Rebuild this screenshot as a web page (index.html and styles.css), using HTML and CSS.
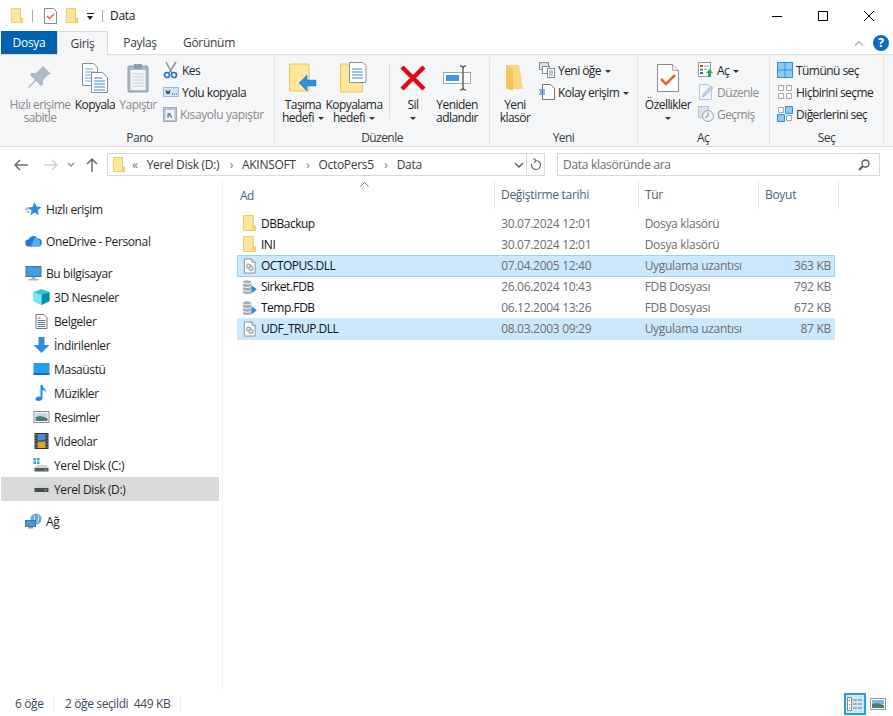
FILE: index.html
```html
<!DOCTYPE html>
<html lang="tr">
<head>
    <meta charset="UTF-8">
    <title>Data</title>
    <link rel="stylesheet" href="styles.css">
</head>
<body>
<svg class="defs" width="0" height="0">
    <symbol id="folder" viewBox="0 0 16 18">
        <path d="M1.500 .5h10.500v16H1.500z" fill="#fee79a" stroke="#e9c765"/>
        <path d="M12 11.500h2.500v5H12z" fill="#fbd872" stroke="#e9c765"/>
    </symbol>
    <symbol id="dll" viewBox="0 0 16 16">
        <path d="M2.500 .5h8l3.500 3.500v11.500H2.500z" fill="#fff" stroke="#8b8b8b"/>
        <path d="M10.500 .5v3.500h3.500" fill="#eee" stroke="#8b8b8b"/>
        <circle cx="7" cy="8" r="2.200" fill="#e4e8ec" stroke="#96a0aa" stroke-width="1.200"/>
        <circle cx="9.500" cy="10.500" r="2.200" fill="#dfe3e8" stroke="#96a0aa" stroke-width="1.200"/>
    </symbol>
    <symbol id="db" viewBox="0 0 16 16">
        <path d="M1 3c0-3 9-3 9 0v11c0 2-9 2-9 0z" fill="#a9adb0"/>
        <path d="M1 3c0 2 9 2 9 0M1 7c0 2 9 2 9 0M1 11c0 2 9 2 9 0" fill="none" stroke="#eef0f1" stroke-width="1.200"/>
        <path d="M10 6l6 4.500-6 4.500z" fill="#2f8fd0"/>
    </symbol>
</svg>

<div class="window">
    <div class="titlebar">
        <svg class="qa-icon" width="14" height="16"><use href="#folder"/></svg>
        <span class="qa-sep"></span>
        <svg class="qa-icon" width="13" height="16" viewBox="0 0 13 16">
            <path d="M.5 .5h9l3 3v12H.5z" fill="#fff" stroke="#8a8a8a"/>
            <path d="M3 8l2.500 2.500L10 6" fill="none" stroke="#e8622a" stroke-width="1.500"/>
        </svg>
        <svg class="qa-icon" width="14" height="16"><use href="#folder"/></svg>
        <span class="qa-drop"></span>
        <span class="qa-sep"></span>
        <span class="window-title">Data</span>
        <div class="window-btns">
            <svg width="12" height="12" viewBox="0 0 12 12"><path d="M1 6.500h10" stroke="#000"/></svg>
            <svg width="12" height="12" viewBox="0 0 12 12"><path d="M1.500 1.500h9v9h-9z" fill="none" stroke="#000"/></svg>
            <svg width="12" height="12" viewBox="0 0 12 12"><path d="M1 1l10 10M11 1L1 11" stroke="#000"/></svg>
        </div>
    </div>

    <div class="tabs">
        <span class="tab tab-file">Dosya</span>
        <span class="tab tab-active">Giriş</span>
        <span class="tab tab-paylas">Paylaş</span>
        <span class="tab tab-gorunum">Görünüm</span>
        <div class="tabs-right">
            <svg width="10" height="6" viewBox="0 0 10 6"><path d="M1 5.500l4-4 4 4" fill="none" stroke="#a8a8a8" stroke-width="1.200"/></svg>
            <span class="help">?</span>
        </div>
    </div>

    <div class="ribbon">
        <div class="group group-pano">
            <div class="group-body">
                <div class="big w64 disabled">
                    <div class="big-icon"><svg width="26" height="28" viewBox="0 0 26 28">
                        <path d="M16 2l8 8-3 1-5 5 0 5-2 1-5-5-7 7-1-1 7-7-5-5 1-2 5 0 5-5z" fill="#aeb9c9"/>
                    </svg></div>
                    <span>Hızlı erişime</span><span>sabitle</span>
                </div>
                <div class="big w46">
                    <div class="big-icon"><svg width="26" height="30" viewBox="0 0 26 30">
                        <path d="M.5 .5h11l4 4v18H.5z" fill="#fff" stroke="#8c8c8c"/>
                        <path d="M3 6h8M3 9h10M3 12h10M3 15h10M3 18h10" stroke="#6ea5e0"/>
                        <path d="M9.500 9.500h11l5 5v15h-16z" fill="#fff" stroke="#8c8c8c"/>
                        <path d="M12 15h8M12 18h11M12 21h11M12 24h11M12 27h11" stroke="#3a83dc"/>
                    </svg></div>
                    <span>Kopyala</span>
                </div>
                <div class="big w40 disabled">
                    <div class="big-icon"><svg width="22" height="30" viewBox="0 0 22 30">
                        <rect x="1" y="3" width="20" height="26" rx="1" fill="#a9b8cc" stroke="#8d9cb2"/>
                        <rect x="3.500" y="7" width="15" height="20" fill="#f2f4f8"/>
                        <path d="M5 11h12M5 14h12M5 17h12M5 20h12M5 23h12" stroke="#c6d3e6"/>
                        <rect x="7" y="1" width="8" height="5" fill="#8d9cb2"/>
                    </svg></div>
                    <span>Yapıştır</span>
                </div>
                <div class="small-col col-pano">
                    <div class="small"><svg width="16" height="18" viewBox="0 0 16 18">
                        <path d="M3 1l6 11M13 1L6 12" stroke="#8a8f96" stroke-width="1.500"/>
                        <circle cx="4" cy="14" r="2.500" fill="none" stroke="#2275c8" stroke-width="1.700"/>
                        <circle cx="11" cy="14" r="2.500" fill="none" stroke="#2275c8" stroke-width="1.700"/>
                    </svg><span>Kes</span></div>
                    <div class="small"><svg width="16" height="10" viewBox="0 0 16 10">
                        <rect x=".5" y=".5" width="15" height="9" fill="#cfe4f7" stroke="#9dbad4"/>
                        <path d="M3 3l1 4 1-3 1 3 1-4M9 7h1M11 7h1M13 7h1" fill="none" stroke="#33475b"/>
                    </svg><span>Yolu kopyala</span></div>
                    <div class="small disabled wide"><svg width="14" height="16" viewBox="0 0 14 16">
                        <rect x=".5" y="1.500" width="13" height="14" fill="#b5c3d4" stroke="#9aabc0"/>
                        <rect x="2.500" y="4" width="9" height="10" fill="#f1f4f8"/>
                        <path d="M5 12V8h3M6 8.500l3 3" fill="none" stroke="#6a7f99" stroke-width="1.400"/>
                    </svg><span>Kısayolu yapıştır</span></div>
                </div>
            </div>
            <div class="group-title">Pano</div>
        </div>

        <div class="group group-duzenle">
            <div class="group-body">
                <div class="big w50">
                    <div class="big-icon"><svg width="28" height="30" viewBox="0 0 28 30">
                        <path d="M.5 1h19.500v27H.5z" fill="#fee79a" stroke="#e9c560"/>
                        <path d="M10 20l8-8v5h9v6h-9v5z" fill="#2f8ee0" stroke="#2579c0" stroke-width=".5"/>
                    </svg></div>
                    <span>Taşıma</span><span>hedefi<i class="drop"></i></span>
                </div>
                <div class="big w52">
                    <div class="big-icon"><svg width="28" height="31" viewBox="0 0 28 31">
                        <path d="M.5 2h7v2h15v26H.5z" fill="#fee79a" stroke="#e9c560"/>
                        <path d="M9.500 .5h13l3.500 3v17H9.500z" fill="#fff" stroke="#8c8c8c"/>
                        <path d="M12 7h10M12 10h11M12 13h11M12 16h11" stroke="#3a83dc"/>
                    </svg></div>
                    <span>Kopyalama</span><span>hedefi<i class="drop"></i></span>
                </div>
                <span class="inner-sep"></span>
                <div class="big w36">
                    <div class="big-icon"><svg width="26" height="26" viewBox="0 0 26 26">
                        <path d="M2 2l22 22M24 2L2 24" stroke="#e30613" stroke-width="4.500"/>
                    </svg></div>
                    <span>Sil</span><span><i class="drop solo"></i></span>
                </div>
                <div class="big w52">
                    <div class="big-icon"><svg width="28" height="26" viewBox="0 0 28 26">
                        <rect x=".5" y="7.500" width="27" height="11" fill="#fff" stroke="#a6a6a6"/>
                        <rect x="3" y="10" width="13" height="6" fill="#3a9ae8"/>
                        <path d="M17 1c2 0 3 1 3 2v20c0 1-1 2-3 2M23 1c-2 0-3 1-3 2v20c0 1 1 2 3 2" fill="none" stroke="#666" stroke-width="1.500"/>
                    </svg></div>
                    <span>Yeniden</span><span>adlandır</span>
                </div>
            </div>
            <div class="group-title">Düzenle</div>
        </div>

        <div class="group group-yeni">
            <div class="group-body">
                <div class="big w44">
                    <div class="big-icon"><svg width="20" height="28" viewBox="0 0 20 28">
                        <path d="M1 1h13l4 24H1z" fill="#fbd67c"/>
                        <path d="M1 1l7 4v22l-7-3z" fill="#f4c562"/>
                    </svg></div>
                    <span>Yeni</span><span>klasör</span>
                </div>
                <div class="small-col col-yeni">
                    <div class="small"><svg width="16" height="16" viewBox="0 0 16 16">
                        <rect x=".5" y=".5" width="9" height="7" fill="#d3e6f6" stroke="#7a93ab"/>
                        <rect x="3.500" y="4.500" width="7" height="7" fill="#fff" stroke="#888"/>
                        <rect x="8.500" y="6.500" width="7" height="9" fill="#fff" stroke="#888"/>
                        <path d="M10 9h4M10 11h4M10 13h4" stroke="#7a93ab"/>
                    </svg><span>Yeni öğe<i class="drop"></i></span></div>
                    <div class="small"><svg width="16" height="16" viewBox="0 0 16 16">
                        <path d="M3.500 .5h8l4 4v11h-12z" fill="#fff" stroke="#777"/>
                        <path d="M0 6h6M1 8h5M0 10h6" stroke="#2275c8"/>
                    </svg><span>Kolay erişim<i class="drop"></i></span></div>
                </div>
            </div>
            <div class="group-title">Yeni</div>
        </div>

        <div class="group group-ac">
            <div class="group-body">
                <div class="big w56">
                    <div class="big-icon"><svg width="22" height="28" viewBox="0 0 22 28">
                        <path d="M.5 .5h15l6 6v21H.5z" fill="#fff" stroke="#8a8a8a"/>
                        <path d="M15.500 .5v6h6" fill="#eee" stroke="#aaa"/>
                        <path d="M4 15l5 5 9-9" fill="none" stroke="#e8622a" stroke-width="2.500"/>
                    </svg></div>
                    <span>Özellikler</span><span><i class="drop solo"></i></span>
                </div>
                <div class="small-col col-ac">
                    <div class="small"><svg width="16" height="16" viewBox="0 0 16 16">
                        <rect x=".5" y=".5" width="12" height="14" fill="#fff" stroke="#999"/>
                        <path d="M2 3h3v2H2z" fill="#d9402e"/><path d="M2 6.500h3v2H2z" fill="#3aa34a"/><path d="M2 10h3v2H2z" fill="#2275c8"/>
                        <path d="M6 4h5M6 7.500h3" stroke="#999"/>
                        <path d="M8 11l3.500-4 3.500 4h-2v4h-3v-4z" fill="#22b14c"/>
                    </svg><span>Aç<i class="drop"></i></span></div>
                    <div class="small disabled"><svg width="16" height="16" viewBox="0 0 16 16">
                        <path d="M1.500 .5h9l3 3v12h-12z" fill="#f3f6fa" stroke="#b9c4d2"/>
                        <path d="M4 13l1-3 8-8 2 2-8 8z" fill="#bed2e8" stroke="#9db4cf" stroke-width=".6"/>
                    </svg><span>Düzenle</span></div>
                    <div class="small disabled"><svg width="16" height="16" viewBox="0 0 16 16">
                        <rect x=".5" y=".5" width="10" height="11" fill="#d6e0ec" stroke="#b9c4d2"/>
                        <circle cx="10" cy="10" r="5.500" fill="#eef1f4" stroke="#9aa2ab"/>
                        <path d="M10 6.500V10l-3 1.500" fill="none" stroke="#7d858e"/>
                    </svg><span>Geçmiş</span></div>
                </div>
            </div>
            <div class="group-title">Aç</div>
        </div>

        <div class="group group-sec">
            <div class="group-body">
                <div class="small-col col-sec">
                    <div class="small"><svg width="16" height="16" viewBox="0 0 16 16">
                        <rect x=".5" y=".5" width="15" height="15" fill="#8ec8f2" stroke="#2f93dc"/>
                        <path d="M8 0v16M0 8h16" stroke="#2f93dc"/>
                    </svg><span>Tümünü seç</span></div>
                    <div class="small"><svg width="16" height="16" viewBox="0 0 16 16">
                        <path d="M1.500 1.500h5v5h-5zM9.500 1.500h5v5h-5zM1.500 9.500h5v5h-5zM9.500 9.500h5v5h-5z" fill="#fff" stroke="#a5a5a5"/>
                    </svg><span>Hiçbirini seçme</span></div>
                    <div class="small"><svg width="16" height="16" viewBox="0 0 16 16">
                        <path d="M1.500 1.500h5v5h-5zM9.500 9.500h5v5h-5z" fill="#fff" stroke="#a5a5a5"/>
                        <path d="M8.500 .5h7v7h-7zM.5 8.500h7v7h-7z" fill="#8ec8f2" stroke="#2f93dc"/>
                    </svg><span>Diğerlerini seç</span></div>
                </div>
            </div>
            <div class="group-title">Seç</div>
        </div>
    </div>

    <div class="addressbar">
        <div class="nav">
            <svg class="nav-back" width="14" height="12" viewBox="0 0 14 12"><path d="M6 1L1 6l5 5M1 6h13" fill="none" stroke="#6d6d6d" stroke-width="1.500"/></svg>
            <svg class="nav-fwd" width="14" height="12" viewBox="0 0 14 12"><path d="M8 1l5 5-5 5M13 6H0" fill="none" stroke="#d0d0d0" stroke-width="1.500"/></svg>
            <svg class="nav-down" width="8" height="5" viewBox="0 0 8 5"><path d="M1 1l3 3 3-3" fill="none" stroke="#8a8a8a" stroke-width="1.300"/></svg>
            <svg class="nav-up" width="12" height="14" viewBox="0 0 12 14"><path d="M1 6l5-5 5 5M6 1v13" fill="none" stroke="#6d6d6d" stroke-width="1.500"/></svg>
        </div>
        <div class="path">
            <svg width="14" height="16"><use href="#folder"/></svg>
            <span class="crumb-more">«</span>
            <span>Yerel Disk (D:)</span><span class="chev">›</span>
            <span>AKINSOFT</span><span class="chev">›</span>
            <span>OctoPers5</span><span class="chev">›</span>
            <span>Data</span>
            <svg class="path-down" width="10" height="6" viewBox="0 0 10 6"><path d="M1 1l4 4 4-4" fill="none" stroke="#555" stroke-width="1.300"/></svg>
            <span class="refresh"><svg width="12" height="13" viewBox="0 0 12 13"><path d="M6 2.500a4.500 4.500 0 1 1-4.300 3.200M3.500 .5L6 2.500 4 5" fill="none" stroke="#6d6d6d" stroke-width="1.200"/></svg></span>
        </div>
        <div class="search">
            <span>Data klasöründe ara</span>
            <svg width="12" height="12" viewBox="0 0 12 12"><circle cx="7.500" cy="4.500" r="3.500" fill="none" stroke="#555" stroke-width="1.300"/><path d="M5 7l-4 4" stroke="#555" stroke-width="1.800"/></svg>
        </div>
    </div>

    <div class="content">
        <nav class="sidebar">
            <div class="tree-row top">
                <svg width="16" height="16" viewBox="0 0 16 16"><path d="M9 1l2 4.500 5 .5-3.700 3.300 1 5L9 11.500 5 14.500l1-5.200L1.500 6.500 7 6z" fill="#2f8ee0"/><path d="M0 8h3M1 11h3" stroke="#2f8ee0"/></svg>
                <span>Hızlı erişim</span>
            </div>
            <div class="tree-row top">
                <svg width="17" height="12" viewBox="0 0 17 12"><path d="M4 11.500a3.500 3.500 0 0 1-.5-7A5 5 0 0 1 12.500 3.500 4 4 0 0 1 13 11.500z" fill="#1f7ad8"/><path d="M9 4c2-2 3-1 3.500 0a4 4 0 0 1 .5 7.500H6z" fill="#54aef0"/></svg>
                <span>OneDrive - Personal</span>
            </div>
            <div class="tree-row top">
                <svg width="16" height="15" viewBox="0 0 16 15"><rect x=".5" y=".5" width="15" height="10" fill="#3aa0ec" stroke="#5e6f80"/><path d="M6 11h4v2H6zM3 13h10v1.500H3z" fill="#a9b6c2"/></svg>
                <span>Bu bilgisayar</span>
            </div>
            <div class="tree-row sub">
                <svg width="16" height="16" viewBox="0 0 16 16"><path d="M8 0l8 3v9l-8 4-8-4V3z" fill="#31c4d8"/><path d="M8 6l8-3v9l-8 4z" fill="#0c8ca8"/><path d="M0 3l8 3v10l-8-4z" fill="#7de3ee"/></svg>
                <span>3D Nesneler</span>
            </div>
            <div class="tree-row sub">
                <svg width="12" height="15" viewBox="0 0 12 15"><path d="M.5 .5h8l3 3v11H.5z" fill="#fff" stroke="#777"/><path d="M2 4h3M2 6.500h8M2 8.500h8M2 10.500h8M2 12.500h8" stroke="#5b7fa6"/></svg>
                <span>Belgeler</span>
            </div>
            <div class="tree-row sub">
                <svg width="16" height="16" viewBox="0 0 16 16"><path d="M5 0h6v8h5l-8 8-8-8h5z" fill="#2f8ee0"/></svg>
                <span>İndirilenler</span>
            </div>
            <div class="tree-row sub">
                <svg width="16" height="12" viewBox="0 0 16 12"><rect width="16" height="11" rx="1" fill="#22a0f0"/><path d="M0 10h16v2H0z" fill="#0f6fc0"/></svg>
                <span>Masaüstü</span>
            </div>
            <div class="tree-row sub">
                <svg width="12" height="16" viewBox="0 0 12 16"><path d="M5 0h2c0 3 4 4 4 8-1-2-2-3-4-3v8c0 2-2 3-4 3s-3-1-3-2c0-2 3-3 5-2z" fill="#1e8ce6"/></svg>
                <span>Müzikler</span>
            </div>
            <div class="tree-row sub">
                <svg width="16" height="12" viewBox="0 0 16 12"><rect x=".5" y=".5" width="15" height="11" fill="#fff" stroke="#8a8a8a"/><path d="M2 2h12v4H2z" fill="#bcd7ec"/><path d="M2 6l5-1 7 2v3H2z" fill="#4d7a74"/></svg>
                <span>Resimler</span>
            </div>
            <div class="tree-row sub">
                <svg width="14" height="16" viewBox="0 0 14 16"><rect width="14" height="16" fill="#333"/><rect x="3" y="1" width="8" height="6.500" fill="#3f8fdc"/><rect x="3" y="8.500" width="8" height="6.500" fill="#d8a530"/><path d="M1 2h1M1 5h1M1 8h1M1 11h1M1 14h1M12 2h1M12 5h1M12 8h1M12 11h1M12 14h1" stroke="#ddd"/></svg>
                <span>Videolar</span>
            </div>
            <div class="tree-row sub">
                <svg width="16" height="14" viewBox="0 0 16 14"><path d="M0 0h2.500v2.500H0zM3.500 0H6v2.500H3.500zM0 3.500h2.500V6H0zM3.500 3.500H6V6H3.500z" fill="#16a8e8"/><path d="M3 7h10l2 3H1z" fill="#d3d6d9"/><rect x="1" y="10" width="14" height="3.500" fill="#555a5f"/><rect x="11" y="11" width="2" height="1.500" fill="#4fd04f"/></svg>
                <span>Yerel Disk (C:)</span>
            </div>
            <div class="tree-row sub current">
                <svg width="16" height="8" viewBox="0 0 16 8"><path d="M3 0h10l2 3H1z" fill="#cfd2d5"/><rect x="1" y="3" width="14" height="4" fill="#454a4f"/><rect x="11" y="4.500" width="2" height="1.500" fill="#4fd04f"/></svg>
                <span>Yerel Disk (D:)</span>
            </div>
            <div class="tree-row top">
                <svg width="17" height="16" viewBox="0 0 17 16"><circle cx="11" cy="6" r="5.500" fill="#5ea9d8"/><path d="M8 2c2 1 2 3 1 5M13 2c1 2 1 5-1 8" stroke="#cfe7f5" fill="none"/><rect x=".5" y="7.500" width="10" height="6" fill="#3aa0ec" stroke="#5e6f80"/><path d="M3 14h5v1.500H3z" fill="#8a98a5"/></svg>
                <span>Ağ</span>
            </div>
        </nav>

        <main class="files">
            <div class="file-head">
                <svg class="sort" width="9" height="5" viewBox="0 0 9 5"><path d="M.5 4.500l4-4 4 4" fill="none" stroke="#777"/></svg>
                <span class="col-name">Ad</span>
                <span class="col-date">Değiştirme tarihi</span>
                <span class="col-type">Tür</span>
                <span class="col-size">Boyut</span>
            </div>
            <div class="file-row">
                <span class="col-name"><svg width="15" height="17"><use href="#folder"/></svg>DBBackup</span>
                <span class="col-date">30.07.2024 12:01</span><span class="col-type">Dosya klasörü</span><span class="col-size"></span>
            </div>
            <div class="file-row">
                <span class="col-name"><svg width="15" height="17"><use href="#folder"/></svg>INI</span>
                <span class="col-date">30.07.2024 12:01</span><span class="col-type">Dosya klasörü</span><span class="col-size"></span>
            </div>
            <div class="file-row selected focused">
                <span class="col-name"><svg width="15" height="16"><use href="#dll"/></svg>OCTOPUS.DLL</span>
                <span class="col-date">07.04.2005 12:40</span><span class="col-type">Uygulama uzantısı</span><span class="col-size">363 KB</span>
            </div>
            <div class="file-row">
                <span class="col-name"><svg width="15" height="16"><use href="#db"/></svg>Sirket.FDB</span>
                <span class="col-date">26.06.2024 10:43</span><span class="col-type">FDB Dosyası</span><span class="col-size">792 KB</span>
            </div>
            <div class="file-row">
                <span class="col-name"><svg width="15" height="16"><use href="#db"/></svg>Temp.FDB</span>
                <span class="col-date">06.12.2004 13:26</span><span class="col-type">FDB Dosyası</span><span class="col-size">672 KB</span>
            </div>
            <div class="file-row selected">
                <span class="col-name"><svg width="15" height="16"><use href="#dll"/></svg>UDF_TRUP.DLL</span>
                <span class="col-date">08.03.2003 09:29</span><span class="col-type">Uygulama uzantısı</span><span class="col-size">87 KB</span>
            </div>
        </main>
    </div>

    <div class="statusbar">
        <span class="count">6 öğe</span>
        <span class="sel">2 öğe seçildi&nbsp; 449 KB</span>
        <div class="views">
            <span class="view active"><svg width="16" height="14" viewBox="0 0 16 14">
                <path d="M.5 .5h4v13h-4z" fill="#fff" stroke="#8a8a8a"/>
                <path d="M2 3h1v1H2zM2 7h1v1H2z" fill="#666"/><path d="M2 10.500h1v1H2z" fill="#c0392b"/>
                <path d="M6 3h4M11 3h4M6 7h4M11 7h4M6 11h4M11 11h4" stroke="#777"/>
            </svg></span>
            <span class="view"><svg width="16" height="12" viewBox="0 0 16 12">
                <rect x=".5" y=".5" width="15" height="11" fill="#fff" stroke="#999"/>
                <path d="M2 2h12v4H2z" fill="#7db7e8"/><path d="M2 6l5-1 7 2v3H2z" fill="#4d7a74"/>
            </svg></span>
        </div>
    </div>
</div>
</body>
</html>
```

FILE: styles.css
```css
* {
    box-sizing: border-box;
}
html, body {
    margin: 0;
    padding: 0;
    background: #fff;
}
body {
    font-family: "Open Sans", "Noto Sans", sans-serif;
    font-size: 12px;
    letter-spacing: -0.3px;
    color: #1e1e1e;
}
.defs {
    display: block;
    height: 0;
}
svg {
    flex: none;
    display: block;
}
.window {
    width: 893px;
    height: 716px;
    display: flex;
    flex-direction: column;
    overflow: hidden;
}

/* title bar */
.titlebar {
    height: 31px;
    display: flex;
    align-items: center;
    padding-left: 10px;
}
.qa-icon {
    margin-right: 8px;
}
.qa-sep {
    width: 1px;
    height: 12px;
    background: #a8a8a8;
    margin-right: 11px;
}
.qa-drop {
    width: 7px;
    height: 7px;
    margin: 1px 8px 0 0;
    border-top: 1px solid #222;
    position: relative;
}
.qa-drop::after {
    content: "";
    position: absolute;
    left: 0;
    top: 2px;
    border: 3.500px solid transparent;
    border-top: 4px solid #222;
    border-bottom: 0;
}
.window-title {
    margin-left: -4px;
    color: #111;
}
.window-btns {
    margin-left: auto;
    display: flex;
    align-items: center;
    gap: 34px;
    padding-right: 18px;
}

/* tabs */
.tabs {
    height: 24px;
    display: flex;
    align-items: stretch;
    padding-left: 1px;
    border-bottom: 1px solid #dadbdc;
}
.tab {
    display: flex;
    align-items: center;
    justify-content: center;
    color: #3b3b3b;
}
.tab-file {
    width: 56px;
    height: 23px;
    background: #0063b1;
    color: #fff;
}
.tab-active {
    width: 51px;
    height: 24px;
    background: #f5f6f7;
    border: 1px solid #dadbdc;
    border-bottom: 0;
}
.tab-paylas {
    margin-left: 16px;
    width: 32px;
}
.tab-gorunum {
    margin-left: 28px;
    width: 50px;
}
.tabs-right {
    margin-left: auto;
    display: flex;
    align-items: center;
    gap: 9px;
    padding-right: 4px;
}
.help {
    width: 16px;
    height: 16px;
    border-radius: 50%;
    background: #0f6cbd;
    color: #fff;
    font-weight: 700;
    line-height: 16px;
    text-align: center;
}

/* ribbon */
.ribbon {
    height: 92px;
    display: flex;
    padding-left: 1px;
    background: #f5f6f7;
    border-bottom: 1px solid #dadbdc;
    letter-spacing: -0.55px;
}
.group {
    display: flex;
    flex-direction: column;
    height: 88px;
    margin-top: 2px;
    border-right: 1px solid #e2e3e4;
}
.group-pano { width: 274px; padding-left: 7px; }
.group-duzenle { width: 215px; padding-left: 3px; }
.group-yeni { width: 148px; padding-left: 3px; }
.group-ac { width: 132px; padding-left: 2px; }
.group-sec { width: 114px; }
.group-body {
    height: 74px;
    display: flex;
}
.group-title {
    text-align: center;
    color: #3b3b3b;
    line-height: 14px;
}
.group-pano .group-title,
.group-duzenle .group-title,
.group-yeni .group-title,
.group-ac .group-title {
    margin-left: -3px;
}
.big {
    flex: none;
    display: flex;
    flex-direction: column;
    align-items: center;
    text-align: center;
    line-height: 13px;
    color: #252525;
    white-space: nowrap;
}
.big span {
    display: block;
    height: 13px;
}
.w64 { width: 64px; }
.w56 { width: 56px; }
.w52 { width: 52px; }
.w50 { width: 50px; }
.w46 { width: 46px; }
.w44 { width: 44px; }
.w40 { width: 40px; }
.w36 { width: 36px; }
.big-icon {
    height: 41px;
    flex: none;
    display: flex;
    align-items: center;
    justify-content: center;
}
.disabled {
    color: #8a8a8a;
}
.drop {
    display: inline-block;
    margin-left: 4px;
    vertical-align: 2px;
    border: 3px solid transparent;
    border-top: 3px solid #333;
    border-bottom: 0;
}
.drop.solo {
    margin-left: 0;
}
.inner-sep {
    width: 1px;
    height: 56px;
    margin: 6px 5px 0 9px;
    background: #dcdddf;
}
.small-col {
    display: flex;
    flex-direction: column;
    padding-top: 2px;
}
.col-pano { margin-left: 5px; }
.col-yeni { margin-left: 2px; }
.col-ac { margin-left: 2px; }
.col-sec { margin-left: 7px; }
.small {
    height: 22px;
    display: flex;
    align-items: center;
    white-space: nowrap;
    color: #252525;
}
.small svg {
    margin-right: 3px;
}
.small.disabled {
    color: #8a8a8a;
}
.small.wide {
    letter-spacing: -0.4px;
}

/* address bar */
.addressbar {
    height: 34px;
    display: flex;
    align-items: center;
    padding-top: 1px;
}
.nav {
    width: 107px;
    display: flex;
    align-items: center;
}
.nav-back { margin-left: 14px; }
.nav-fwd { margin-left: 16px; }
.nav-down { margin-left: 9px; }
.nav-up { margin-left: 11px; }
.path {
    width: 438px;
    height: 23px;
    display: flex;
    align-items: center;
    border: 1px solid #d9d9d9;
    padding-left: 4px;
    color: #3a3a3a;
}
.crumb-more {
    margin: 0 9px 0 6px;
    color: #777;
}
.chev {
    margin: 0 9px 0 10.5px;
    color: #777;
}
.path-down {
    margin-left: auto;
    margin-right: 2px;
}
.refresh {
    width: 18px;
    height: 21px;
    border-left: 1px solid #d9d9d9;
    display: flex;
    align-items: center;
    justify-content: center;
}
.search {
    width: 323px;
    height: 23px;
    margin-left: 12px;
    display: flex;
    align-items: center;
    justify-content: space-between;
    padding: 0 9px 0 5px;
    border: 1px solid #d9d9d9;
    color: #6d6d6d;
}

/* main area */
.content {
    flex: 1;
    display: flex;
    min-height: 0;
}
.sidebar {
    width: 223px;
    padding: 16px 3px 0 1px;
    border-right: 1px solid #f0f0f0;
    letter-spacing: -0.38px;
}
.tree-row {
    height: 24px;
    display: flex;
    align-items: center;
    color: #1e1e1e;
}
.tree-row svg {
    margin-right: 4px;
}
.top {
    margin-bottom: 8px;
    padding-left: 24px;
}
.top svg {
    width: 17px;
}
.sub {
    padding-left: 32px;
}
.sub svg {
    width: 17px;
}
.tree-row:nth-child(3) {
    margin-bottom: 0;
}
.current {
    background: #d9d9d9;
    margin-bottom: 8px;
}
.files {
    flex: 1;
    padding: 1px 0 0 14px;
}
.file-head {
    height: 27px;
    display: flex;
    align-items: center;
    color: #4c607a;
    position: relative;
    margin-bottom: 4px;
}
.sort {
    position: absolute;
    left: 123px;
    top: 0;
}
.file-head span {
    height: 27px;
    line-height: 26px;
    border-right: 1px solid #e5e5e5;
    padding-left: 3px;
}
.col-name {
    width: 258px;
    padding-left: 4px;
    display: flex;
    align-items: center;
    color: #111;
    letter-spacing: -0.5px;
}
.col-name svg {
    margin-right: 4px;
}
.col-date {
    width: 144px;
    padding-left: 6px;
    color: #6d6d6d;
}
.col-type {
    width: 120px;
    padding-left: 6px;
    color: #6d6d6d;
}
.col-size {
    width: 76px;
    padding-right: 3px;
    text-align: right;
    color: #6d6d6d;
}
.file-head .col-name { width: 258px; color: #4c607a; }
.file-head .col-date { width: 144px; padding-left: 6px; color: #4c607a; }
.file-head .col-type { width: 120px; padding-left: 6px; color: #4c607a; }
.file-head .col-size { width: 80px; padding-left: 6px; text-align: left; color: #4c607a; }
.file-row {
    width: 598px;
    height: 22px;
    margin-bottom: -1px;
    padding-bottom: 1px;
    display: flex;
    align-items: center;
    border: 1px solid transparent;
}
.selected {
    background: #cce8ff;
}
.focused {
    border-color: #99d1ff;
}

/* status bar */
.statusbar {
    height: 26px;
    flex: none;
    display: flex;
    align-items: center;
    padding-left: 15px;
    padding-top: 1px;
    color: #3b4a5c;
    letter-spacing: -0.38px;
}
.count {
    width: 39px;
    height: 14px;
    line-height: 14px;
    border-right: 1px solid #ececec;
}
.sel {
    margin-left: 11px;
    padding-right: 10px;
    height: 14px;
    line-height: 14px;
    border-right: 1px solid #ececec;
}
.views {
    margin-left: auto;
    display: flex;
    align-items: center;
    padding-right: 7px;
}
.view {
    height: 22px;
    display: flex;
    align-items: center;
    justify-content: center;
}
.view.active {
    width: 22px;
    background: #cce8ff;
    border: 2px solid #26a0da;
    margin-right: 4px;
}
```
